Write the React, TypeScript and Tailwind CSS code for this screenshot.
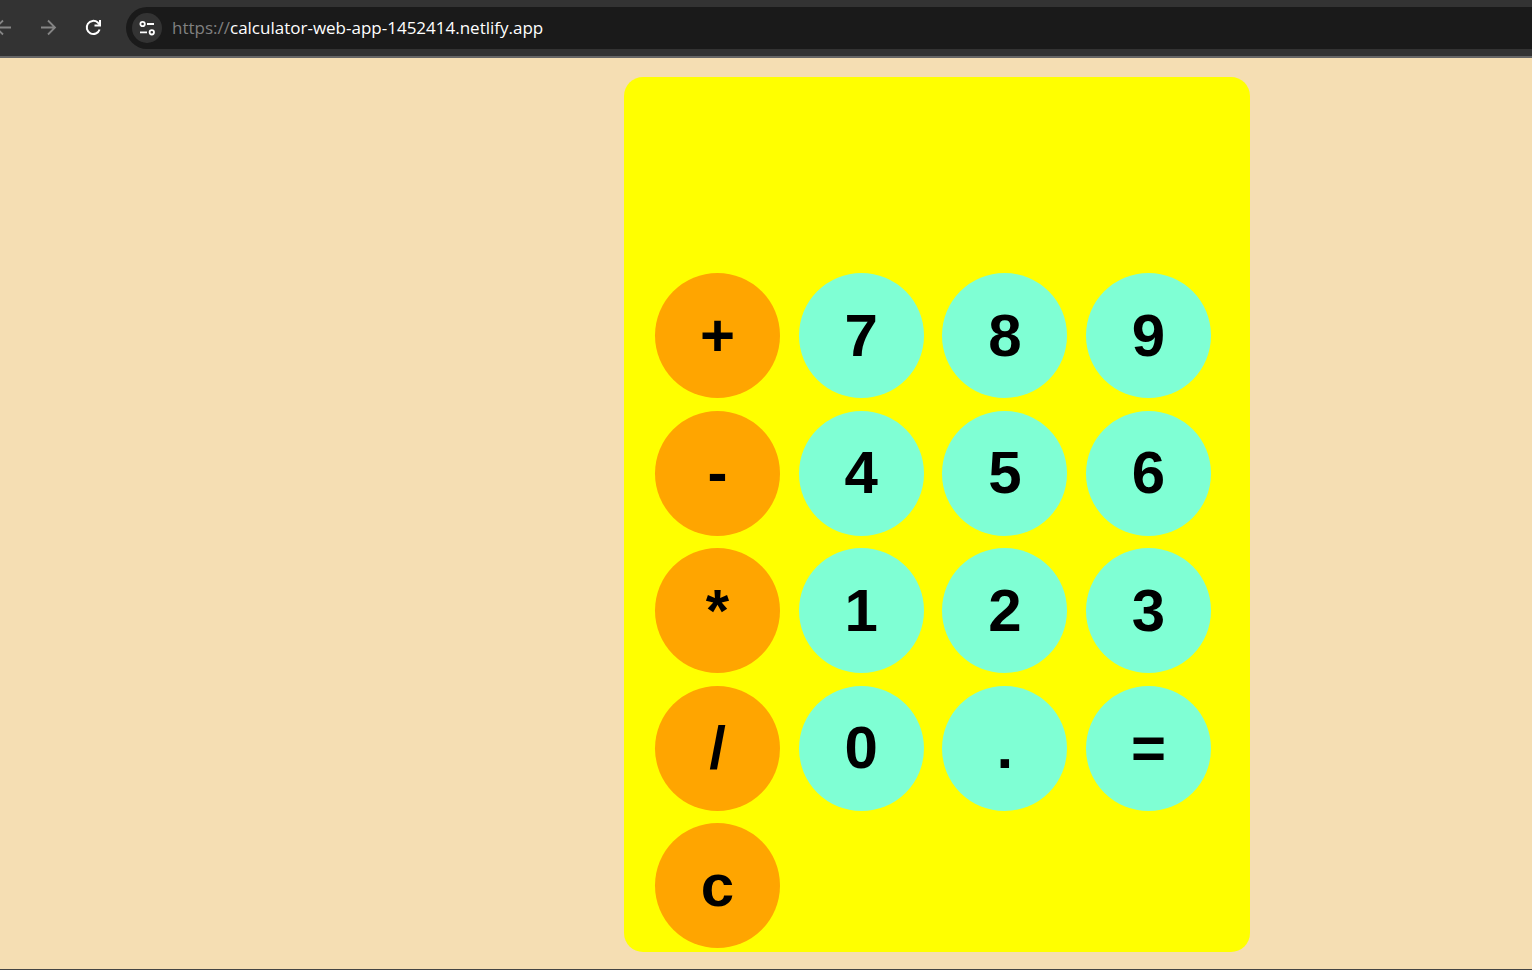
import { useState } from "react";

const keys = ["+", "7", "8", "9", "-", "4", "5", "6", "*", "1", "2", "3", "/", "0", ".", "=", "c"];
const operators = ["+", "-", "*", "/", "c"];

function evaluate(expression: string): string {
  const tokens = expression.match(/\d*\.?\d+|[-+*/]/g) ?? [];
  const terms: number[] = [];
  let operator = "+";
  for (const token of tokens) {
    if (/^[-+*/]$/.test(token)) {
      operator = token;
      continue;
    }
    const value = Number(token);
    if (operator === "+") terms.push(value);
    else if (operator === "-") terms.push(-value);
    else if (operator === "*") terms.push((terms.pop() ?? 0) * value);
    else terms.push((terms.pop() ?? 0) / value);
  }
  return tokens.length ? String(terms.reduce((sum, term) => sum + term, 0)) : "";
}

function BrowserBar() {
  return (
    <header className="flex h-[58px] items-start border-b-2 border-[#666666] bg-[#333333] pt-[7px]">
      <nav className="flex h-[42px] w-[126px] shrink-0 items-center overflow-hidden" aria-label="Browser">
        <button type="button" aria-label="Back" className="-ml-2 shrink-0 text-[#858585]">
          <svg width="20" height="20" viewBox="0 0 20 20" fill="none" stroke="currentColor" strokeWidth="1.8">
            <path d="M19 9.5H4M11 2.5L4 9.5L11 16.5" />
          </svg>
        </button>
        <button type="button" aria-label="Forward" className="ml-[26px] shrink-0 text-[#858585]">
          <svg width="20" height="20" viewBox="0 0 20 20" fill="none" stroke="currentColor" strokeWidth="1.8">
            <path d="M3 9.5H17M10 2.5L17 9.5L10 16.5" />
          </svg>
        </button>
        <button type="button" aria-label="Reload" className="ml-[25px] shrink-0 text-white">
          <svg width="20" height="20" viewBox="0 0 20 20" fill="none" stroke="currentColor" strokeWidth="2">
            <path d="M16.6 11.5A6.6 6.6 0 1 1 14.8 4.6L17 7" />
            <path d="M17 2V7.5H11.5" />
          </svg>
        </button>
      </nav>
      <div className="flex h-[42px] grow items-center rounded-l-full bg-[#1a1a1a] pl-[6px] text-[17px]">
        <button
          type="button"
          aria-label="View site information"
          className="flex size-[30px] shrink-0 items-center justify-center rounded-full bg-[#333333] text-white"
        >
          <svg width="18" height="18" viewBox="0 0 18 18" fill="none" stroke="currentColor" strokeWidth="1.8">
            <circle cx="4.6" cy="5" r="2.2" />
            <path d="M9 5H16M2 13.3H9" />
            <circle cx="13.8" cy="13.3" r="2.2" />
          </svg>
        </button>
        <label htmlFor="address" className="ml-[10px] font-['Open_Sans',sans-serif] text-[#808080]">
          https://
        </label>
        <input
          id="address"
          type="text"
          defaultValue="calculator-web-app-1452414.netlify.app"
          className="min-w-0 grow bg-transparent font-['Open_Sans',sans-serif] text-white outline-none"
        />
      </div>
    </header>
  );
}

export default function App() {
  const [expression, setExpression] = useState("");

  const press = (key: string) => {
    if (key === "c") setExpression("");
    else if (key === "=") setExpression(evaluate(expression));
    else setExpression(expression + key);
  };

  return (
    <div className="flex min-h-screen flex-col border-b border-[#444444] bg-[#f5deb3]">
      <BrowserBar />
      <main className="pt-[19px] pb-[17px] pl-[624px] font-['Liberation_Sans',Arial,sans-serif]">
        <div className="w-full max-w-[626px] rounded-[19px] bg-[#ffff00] pr-[39px] pb-1 pl-[31px]">
          <input
            type="text"
            readOnly
            aria-label="Result"
            value={expression}
            className="block h-[196px] w-full bg-transparent text-right text-[60px] font-bold text-black outline-none"
          />
          <div className="grid h-[675px] grid-cols-[repeat(4,125px)] content-between justify-between">
            {keys.map((key) => (
              <button
                key={key}
                type="button"
                onClick={() => press(key)}
                className={`size-[125px] rounded-full text-[60px] leading-none font-bold text-black ${
                  operators.includes(key) ? "bg-[#ffa500]" : "bg-[#7fffd4]"
                }`}
              >
                {key}
              </button>
            ))}
          </div>
        </div>
      </main>
    </div>
  );
}
